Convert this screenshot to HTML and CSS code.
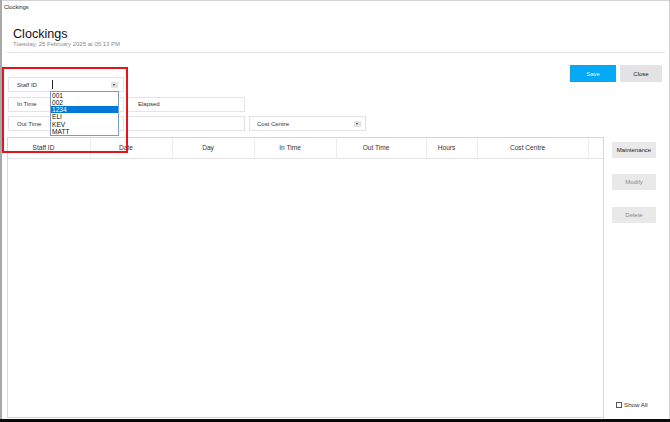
FILE: index.html
```html
<!DOCTYPE html>
<html lang="en">
<head>
    <meta charset="UTF-8">
    <meta name="viewport" content="width=device-width, initial-scale=1.0">
    <title>Clockings</title>

    <link rel="stylesheet" href="styles.css">
</head>
<body>

  <div class="window">
    <div class="titlebar">Clockings</div>

    <div class="header">
      <h1>Clockings</h1>
      <div class="stamp">Tuesday, 25 February 2025 at 05:13 PM</div>
    </div>

    <div class="toolbar">
      <div class="form">
        <div class="row">
          <div class="field staff">
            <span class="label">Staff ID</span>
            <span class="caret"></span>
            <span class="drop"></span>
            <ul class="list">
              <li>001</li>
              <li>002</li>
              <li class="picked">1234</li>
              <li>ELI</li>
              <li>KEV</li>
              <li>MATT</li>
            </ul>
          </div>
        </div>
        <div class="row">
          <div class="field"><span class="label">In Time</span></div>
          <div class="field wide"><span class="value">Elapsed</span></div>
        </div>
        <div class="row">
          <div class="field"><span class="label">Out Time</span></div>
          <div class="field wide"></div>
          <div class="field combo">
            <span class="value">Cost Centre</span>
            <span class="drop"></span>
          </div>
        </div>
      </div>

      <div class="actions">
        <button class="btn save">Save</button>
        <button class="btn close">Close</button>
      </div>
    </div>

    <div class="main">
      <div class="grid">
        <div class="head">
          <div class="col">Staff ID</div>
          <div class="col">Date</div>
          <div class="col">Day</div>
          <div class="col">In Time</div>
          <div class="col">Out Time</div>
          <div class="col">Hours</div>
          <div class="col">Cost Centre</div>
          <div class="col last"></div>
        </div>
      </div>

      <div class="side">
        <button class="btn side-btn first">Maintenance</button>
        <button class="btn side-btn dim">Modify</button>
        <button class="btn side-btn dim gap">Delete</button>
        <label class="show"><span class="check"></span>Show All</label>
      </div>
    </div>

    <!-- highlight drawn over the staff picker -->
    <div class="mark"></div>
  </div>

</body>
</html>
```

FILE: styles.css
```css
html, body {
    margin: 0;
    padding: 0;
}

body {
    background: #0a0a0a;
    font-family: "Liberation Sans", Arial, sans-serif;
    color: #333;
}

.window {
    position: relative;
    height: 419px;
    background: #fff;
    box-shadow: inset 2px 0 0 #a9a9a9, inset 0 1px 0 #d2d2d2, inset -1px 0 0 #d2d2d2;
    overflow: hidden;
}

.titlebar {
    height: 14px;
    line-height: 14px;
    padding-left: 4px;
    font-size: 5.7px;
    color: #1a1a1a;
}

.header {
    margin: 0 5px 0 7px;
    padding: 14px 0 4px 6px;
    border-bottom: 1px solid #e4e4e4;
}

h1 {
    margin: 0;
    font-size: 12.6px;
    line-height: 13px;
    font-weight: normal;
    color: #111;
}

.stamp {
    font-size: 6px;
    line-height: 7px;
    color: #8a8a8a;
}

/* form + save/close */
.toolbar {
    display: flex;
    align-items: flex-start;
}

.form {
    margin-left: 8px;
    padding-top: 24px;
    display: flex;
    flex-direction: column;
    gap: 4.5px;
}

.row {
    display: flex;
    height: 15px;
}

.field {
    position: relative;
    display: flex;
    align-items: center;
    width: 116px;
    height: 15px;
    box-sizing: border-box;
    border: 1px solid #e3e3e3;
}

.field.wide {
    width: 118px;
    margin-left: 3px;
}

.field.combo {
    width: 117px;
    margin-left: 4px;
}

.label {
    width: 41px;
    padding-left: 8px;
    box-sizing: border-box;
    font-size: 6px;
    color: #333;
}

.value {
    padding-left: 10px;
    font-size: 6px;
    color: #333;
}

.combo .value {
    padding-left: 7px;
}

.caret {
    width: 1px;
    height: 9px;
    margin-left: 2px;
    background: #222;
}

.drop {
    position: relative;
    margin-left: auto;
    margin-right: 5px;
    width: 7px;
    height: 6px;
    background: #e2e2e2;
}

.combo .drop {
    margin-right: 4px;
}

.drop::after {
    content: '';
    position: absolute;
    left: 2px;
    top: 2px;
    border-left: 1.5px solid transparent;
    border-right: 1.5px solid transparent;
    border-top: 2px solid #333;
}

.list {
    position: absolute;
    left: 41px;
    top: 12.5px;
    z-index: 5;
    width: 69px;
    margin: 0;
    padding: 0;
    list-style: none;
    background: #fff;
    border: 1px solid #7a9cc6;
    box-sizing: border-box;
}

.list li {
    height: 7.3px;
    line-height: 7.3px;
    padding-left: 1px;
    font-size: 6.6px;
    color: #111;
}

.list .picked {
    background: #0078d7;
    color: #fff;
}

.actions {
    display: flex;
    gap: 4px;
    margin: 12px 8px 0 auto;
}

.btn {
    border: none;
    padding: 0;
    font-family: inherit;
    font-size: 6px;
    cursor: pointer;
}

.save {
    width: 46px;
    height: 17px;
    background: #05a9f4;
    color: #e6f6ff;
}

.close {
    width: 42px;
    height: 17px;
    background: #e3e3e3;
    color: #222;
}

/* table + side buttons */
.main {
    display: flex;
    height: 281px;
    margin: 6px 0 0 7px;
}

.grid {
    width: 597px;
    box-sizing: border-box;
    border: 1px solid #d6d6d6;
}

.head {
    display: grid;
    grid-template-columns: 83px 82px 82px 82px 90px 51px 111px 1fr;
    height: 20px;
    border-bottom: 1px solid #e4e4e4;
}

.col {
    padding-right: 11px;
    border-right: 1px solid #ececec;
    text-align: center;
    font-size: 6.6px;
    line-height: 20px;
    color: #333;
}

.col.last {
    border-right: none;
}

.side {
    flex: 1;
    display: flex;
    flex-direction: column;
    align-items: flex-start;
    padding-left: 8px;
}

.side-btn {
    width: 44px;
    height: 16px;
    margin-top: 16px;
    background: #e9e9e9;
    color: #222;
    font-size: 6px;
}

.side-btn.first {
    margin-top: 5px;
}

.side-btn.gap {
    margin-top: 17px;
}

.side-btn.dim {
    color: #8a8a8a;
}

.show {
    display: flex;
    align-items: center;
    margin: auto 0 10px 4px;
    height: 7px;
    font-size: 6.2px;
    color: #333;
}

.check {
    width: 6px;
    height: 6px;
    margin-right: 2px;
    box-sizing: border-box;
    border: 1px solid #555;
}

.mark {
    position: absolute;
    left: 2px;
    top: 67px;
    z-index: 6;
    width: 126px;
    height: 85.5px;
    box-sizing: border-box;
    border: 2.5px solid #e3141b;
}
```
